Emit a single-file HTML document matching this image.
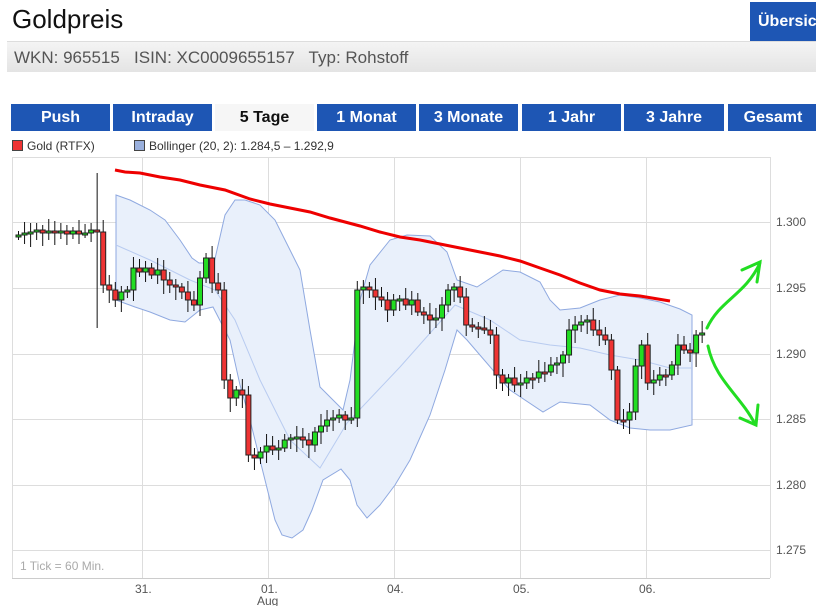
<!DOCTYPE html>
<html><head><meta charset="utf-8"><style>
body{margin:0;width:816px;height:606px;overflow:hidden;background:#fff;font-family:"Liberation Sans",sans-serif;position:relative}
.a{position:absolute}
h1{position:absolute;left:12px;top:4px;margin:0;font-weight:normal;font-size:26px;color:#111}
.sub{left:7px;top:41px;width:809px;height:31px;background:linear-gradient(#f4f4f4,#e4e4e4);border-top:1px solid #ddd;font-size:17px;color:#555;line-height:31px;padding-left:7px;box-sizing:border-box}
.ub{left:750px;top:2px;width:70px;height:39px;background:#1e56b4;color:#fff;font-weight:bold;font-size:16px;line-height:39px;padding-left:8px;box-sizing:border-box;overflow:hidden;white-space:nowrap}
.t{top:104px;height:27px;background:#1e56b4;color:#fff;font-weight:bold;font-size:16px;line-height:27px;text-align:center}
.t.s{background:#f6f6f6;color:#111}
.lg{top:139px;font-size:12px;color:#333}
.sq{display:inline-block;width:9px;height:9px;border:1px solid #444;vertical-align:-1px;margin-right:4px}
</style></head><body>
<h1>Goldpreis</h1>
<div class="a ub">Übersicht</div>
<div class="a sub">WKN: 965515 &nbsp; ISIN: XC0009655157 &nbsp; Typ: Rohstoff</div>
<div class="a t" style="left:11px;width:99px">Push</div>
<div class="a t" style="left:113px;width:99px">Intraday</div>
<div class="a t s" style="left:215px;width:99px">5 Tage</div>
<div class="a t" style="left:317px;width:99px">1 Monat</div>
<div class="a t" style="left:419px;width:99px">3 Monate</div>
<div class="a t" style="left:522px;width:99px">1 Jahr</div>
<div class="a t" style="left:624px;width:100px">3 Jahre</div>
<div class="a t" style="left:728px;width:90px">Gesamt</div>
<div class="a lg" style="left:12px"><span class="sq" style="background:#e33"></span>Gold (RTFX)</div>
<div class="a lg" style="left:134px"><span class="sq" style="background:#9ab0dd"></span>Bollinger (20, 2): 1.284,5 – 1.292,9</div>
<svg class="a" style="left:0;top:0" width="816" height="606" id="ch">
<g stroke="#ddd" stroke-width="1">
<line x1="12" y1="157.5" x2="770" y2="157.5"/>
<line x1="12.5" y1="157" x2="12.5" y2="578"/>
<line x1="770.5" y1="157" x2="770.5" y2="578"/>
<line x1="12" y1="578.5" x2="770" y2="578.5" stroke="#ccc"/>
<line x1="142.5" y1="157" x2="142.5" y2="578"/><line x1="268.5" y1="157" x2="268.5" y2="578"/>
<line x1="394.5" y1="157" x2="394.5" y2="578"/><line x1="520.5" y1="157" x2="520.5" y2="578"/>
<line x1="646.5" y1="157" x2="646.5" y2="578"/>
<line x1="12" y1="222.5" x2="770" y2="222.5"/><line x1="12" y1="288.5" x2="770" y2="288.5"/>
<line x1="12" y1="354.5" x2="770" y2="354.5"/><line x1="12" y1="419.5" x2="770" y2="419.5"/>
<line x1="12" y1="485.5" x2="770" y2="485.5"/><line x1="12" y1="550.5" x2="770" y2="550.5"/>
</g>
<path fill="#e9f0fb" stroke="#8fa9e0" stroke-width="1" d="M116,195 L130,200 150,210 165,220 180,240 192,258 199,263 214,263 225,215 235,200 245,200 260,205 275,220 290,250 300,270 310,330 320,387 343,410 350,380 360,300 370,265 390,240 407,235 430,236 447,252 457,280 477,287 503,270 520,272 540,282 550,300 560,310 580,308 600,300 620,295 640,298 660,302 680,309 692,315 L692,425 670,430 650,430 630,428 610,420 590,405 560,402 543,412 510,390 467,340 457,330 445,370 430,415 410,460 395,485 380,505 367,518 357,505 350,480 341,469 323,480 312,510 303,530 292,538 282,535 275,520 265,480 250,420 240,385 230,340 213,307 200,310 185,322 170,320 150,312 135,307 116,300Z"/>
<path fill="none" stroke="#b8cbf0" stroke-width="1" d="M116,245 L150,260 190,280 215,290 235,320 260,380 290,440 320,468 347,423 400,367 455,305 490,320 520,340 550,345 580,348 610,355 640,360 670,368 692,368"/>
<path fill="none" stroke="#e00" stroke-width="3" d="M115,170 L125,172 140,173 160,177 180,180 200,185 225,190 250,199 270,204 290,208 310,212 330,218 360,226 380,232 400,237 420,240 440,244 460,248 480,252 500,256 520,261 540,268 560,275 580,283 600,290 620,294 640,296 670,301"/>
<g id="cd"></g>
<g fill="none" stroke="#2d2" stroke-width="3" stroke-linecap="round">
<path d="M707,328 C720,300 745,295 760,263 M742,270 L760,262 L757,282"/>
<path d="M708,346 C715,380 740,395 755,424 M740,418 L756,425 L758,405"/>
</g>
<g font-size="12" fill="#555" font-family="Liberation Sans,sans-serif">
<text x="776" y="226">1.300</text><text x="776" y="292">1.295</text><text x="776" y="358">1.290</text>
<text x="776" y="423">1.285</text><text x="776" y="489">1.280</text><text x="776" y="554">1.275</text>
<text x="135" y="593">31.</text><text x="261" y="593">01.</text><text x="387" y="593">04.</text>
<text x="513" y="593">05.</text><text x="639" y="593">06.</text><text x="257" y="605">Aug</text>
<text x="20" y="570" fill="#aaa">1 Tick = 60 Min.</text>
</g>
</svg>
<script>
var c=[235,233,232,230,233,231,233,231,234,231,234,233,230,232,285,290,300,292,290,268,272,268,275,270,280,285,287,292,300,305,278,258,283,290,380,398,390,395,455,458,452,446,450,448,440,438,437,440,445,432,426,420,418,415,420,418,290,287,290,297,300,310,300,299,305,300,312,315,320,318,305,290,287,297,325,327,328,330,335,375,383,378,385,383,378,378,372,372,365,363,355,330,325,322,320,330,335,340,370,420,420,412,366,345,383,380,375,375,365,345,350,353,335,333];
var s='',p=236;
for(var i=0;i<c.length;i++){var x=16+i*6.05,o=p,cl=c[i],t=Math.min(o,cl),b=Math.max(o,cl),h=Math.max(b-t,2);
var w1=t-4-(i*7%9),w2=b+4+(i*5%11);
if(i==13){w1=173;w2=328}
s+='<line x1="'+(x+2.5)+'" y1="'+w1+'" x2="'+(x+2.5)+'" y2="'+w2+'" stroke="#111"/>';
s+='<rect x="'+x+'" y="'+t+'" width="5" height="'+h+'" fill="'+(cl<o?'#2d2':'#e33')+'" stroke="#222" stroke-width="1"/>';p=cl;}
document.getElementById('cd').innerHTML=s;
</script>
</body></html>
